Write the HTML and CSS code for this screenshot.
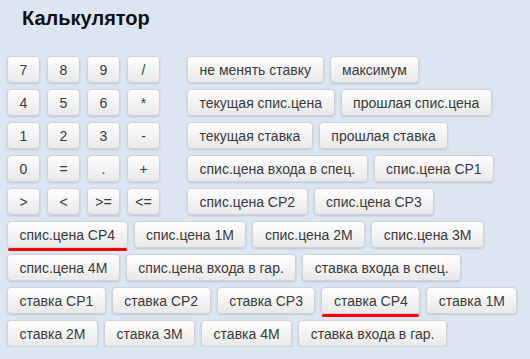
FILE: index.html
```html
<!DOCTYPE html>
<html lang="ru">
<head>
  <meta charset="UTF-8" />
  <title>Калькулятор</title>
  <link rel="stylesheet" href="styles.css">
</head>
<body>
  <h1>Калькулятор</h1>

  <div id="calc">
    <!-- digits + first text rows -->
    <div class="top">
      <div class="keys">
        <button class="key">7</button><button class="key">8</button><button class="key">9</button><button class="key">/</button>
        <button class="key">4</button><button class="key">5</button><button class="key">6</button><button class="key">*</button>
        <button class="key">1</button><button class="key">2</button><button class="key">3</button><button class="key">-</button>
        <button class="key">0</button><button class="key">=</button><button class="key">.</button><button class="key">+</button>
        <button class="key">&gt;</button><button class="key">&lt;</button><button class="key">&gt;=</button><button class="key">&lt;=</button>
      </div>
      <div class="fields">
        <div class="row"><button>не менять ставку</button><button>максимум</button></div>
        <div class="row"><button>текущая спис.цена</button><button>прошлая спис.цена</button></div>
        <div class="row"><button>текущая ставка</button><button>прошлая ставка</button></div>
        <div class="row"><button>спис.цена входа в спец.</button><button>спис.цена СР1</button></div>
        <div class="row"><button>спис.цена СР2</button><button>спис.цена СР3</button></div>
      </div>
    </div>

    <div class="row"><button class="marked">спис.цена СР4</button><button>спис.цена 1М</button><button>спис.цена 2М</button><button>спис.цена 3М</button></div>
    <div class="row"><button>спис.цена 4М</button><button>спис.цена входа в гар.</button><button>ставка входа в спец.</button></div>
    <div class="row"><button>ставка СР1</button><button>ставка СР2</button><button>ставка СР3</button><button class="marked">ставка СР4</button><button>ставка 1М</button></div>
    <div class="row"><button>ставка 2М</button><button>ставка 3М</button><button>ставка 4М</button><button>ставка входа в гар.</button></div>
  </div>
</body>
</html>
```

FILE: styles.css
```css
body {
  background-color: #dce6f2;
  color: #333;
  font-family: "Liberation Sans", Arial, sans-serif;
  margin: 0;
  padding: 0 7px;
}
h1 {
  font-size: 20px;
  line-height: 24px;
  color: #111;
  margin: 6px 0 26px 15px;
}
#calc {
  display: flex;
  flex-direction: column;
  gap: 6px;
}
.top {
  display: flex;
  gap: 27px;
}
.keys {
  display: grid;
  grid-template-columns: repeat(4, 33px);
  grid-auto-rows: 27px;
  column-gap: 7px;
  row-gap: 6px;
}
.fields {
  display: flex;
  flex-direction: column;
  gap: 6px;
}
.row {
  display: flex;
  gap: 6px;
}
button {
  position: relative;
  height: 27px;
  padding: 0 11.5px;
  font-family: "Liberation Sans", Arial, sans-serif;
  font-size: 14px;
  color: #3a3a3a;
  background: linear-gradient(#ffffff, #e8e8e8);
  border: 1px solid #cfd3d8;
  border-radius: 4px;
  box-shadow: 0 1px 2px rgba(0, 0, 0, 0.15);
  white-space: nowrap;
  cursor: pointer;
}
.key {
  width: 33px;
  padding: 0;
}
/* red annotation under a button */
.marked::after {
  content: "";
  position: absolute;
  left: 0;
  right: 0;
  bottom: -4px;
  height: 3px;
  border-radius: 2px;
  background: #ff0000;
}
```
